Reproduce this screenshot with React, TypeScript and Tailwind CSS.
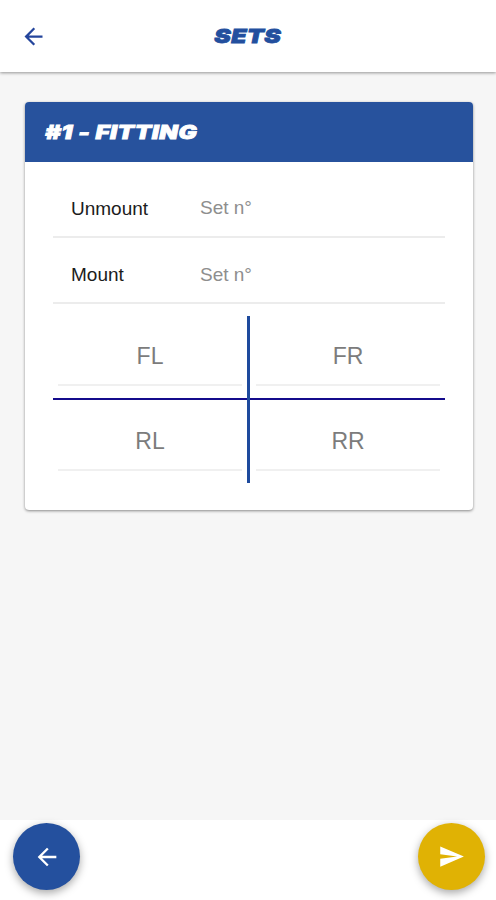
import { useState } from 'react';
import { MdArrowBack, MdSend } from 'react-icons/md';

interface SetField {
  id: string;
  label: string;
}

const setFields: SetField[] = [
  { id: 'unmount', label: 'Unmount' },
  { id: 'mount', label: 'Mount' },
];

const wheels = ['FL', 'FR', 'RL', 'RR'];

function App() {
  const [values, setValues] = useState<Record<string, string>>({});

  const updateValue = (id: string, value: string) => {
    setValues({ ...values, [id]: value });
  };

  return (
    <div className="h-[900px] w-full flex flex-col bg-[#f6f6f6] overflow-hidden font-['Liberation_Sans',sans-serif]">
      <header className="relative h-[72px] shrink-0 grid grid-cols-[48px_1fr_48px] items-center bg-white pt-px shadow-[0_1px_3px_rgba(0,0,0,0.4)]">
        <button aria-label="Back" className="pl-5 text-[#24459c]">
          <MdArrowBack size={27} />
        </button>
        <h1 className="justify-self-center origin-center scale-x-[1.3] text-[19px] leading-6 tracking-[0.3px] font-black italic font-['Inter',sans-serif] text-[#234f9e] [-webkit-text-stroke:0.8px_#234f9e]">
          SETS
        </h1>
      </header>

      <main className="flex-1 pt-[30px] pl-[25px] pr-[23px]">
        <section className="h-[408px] rounded bg-white overflow-hidden shadow-[0_1px_3px_rgba(0,0,0,0.45)]">
          <div className="h-[60px] flex items-center pl-5 bg-[#27529d]">
            <h2 className="origin-left scale-x-[1.31] text-[18.5px] leading-6 tracking-[0.35px] font-black italic font-['Inter',sans-serif] text-white [-webkit-text-stroke:0.8px_white] whitespace-nowrap">
              #1 - FITTING
            </h2>
          </div>

          <div className="pl-7 pr-[28px] pt-[9px]">
            {setFields.map((field) => (
              <label key={field.id} className="h-[66.5px] flex items-center pl-[18px] border-b-2 border-[#ececec] text-[19px]">
                <span className="w-[129px] pt-[11px] text-[#1c1c1c]">{field.label}</span>
                <input
                  type="text"
                  value={values[field.id] || ''}
                  onChange={(e) => updateValue(field.id, e.target.value)}
                  placeholder="Set n°"
                  className="w-[200px] pt-[10px] outline-none placeholder:text-[#8e8e8e]"
                />
              </label>
            ))}

            {/* One cell per wheel, split by the axle cross */}
            <div className="relative mt-[12px] h-[167px] grid grid-cols-2 grid-rows-[85px_82px]">
              {wheels.map((wheel) => (
                <div key={wheel} className="pl-[5px] pr-[7px] even:pl-[7px] even:pr-[5px]">
                  <input
                    type="text"
                    value={values[wheel] || ''}
                    onChange={(e) => updateValue(wheel, e.target.value)}
                    placeholder={wheel}
                    className="w-full h-[70px] pt-[13px] border-b-2 border-[#f0f0f0] text-center text-[23px] outline-none placeholder:text-[#7c7c7c]"
                  />
                </div>
              ))}
              <span className="absolute left-0 right-0 top-[82px] h-[2px] bg-[#140b8c]" />
              <span className="absolute left-[194px] top-0 bottom-0 w-[3px] bg-[#1e4a9d]" />
            </div>
          </div>
        </section>
      </main>

      <footer className="h-20 shrink-0 flex justify-between items-start bg-white pt-[3px] pl-[13px] pr-[11px]">
        <button aria-label="Previous" className="w-[67px] h-[67px] rounded-full flex items-center justify-center bg-[#24509e] text-white shadow-[0_3px_9px_rgba(0,0,0,0.35)]">
          <MdArrowBack size={28} />
        </button>
        <button aria-label="Send" className="w-[67px] h-[67px] rounded-full flex items-center justify-center bg-[#e0b204] text-white shadow-[0_3px_9px_rgba(0,0,0,0.35)]">
          <MdSend size={27} />
        </button>
      </footer>
    </div>
  );
}

export default App;
